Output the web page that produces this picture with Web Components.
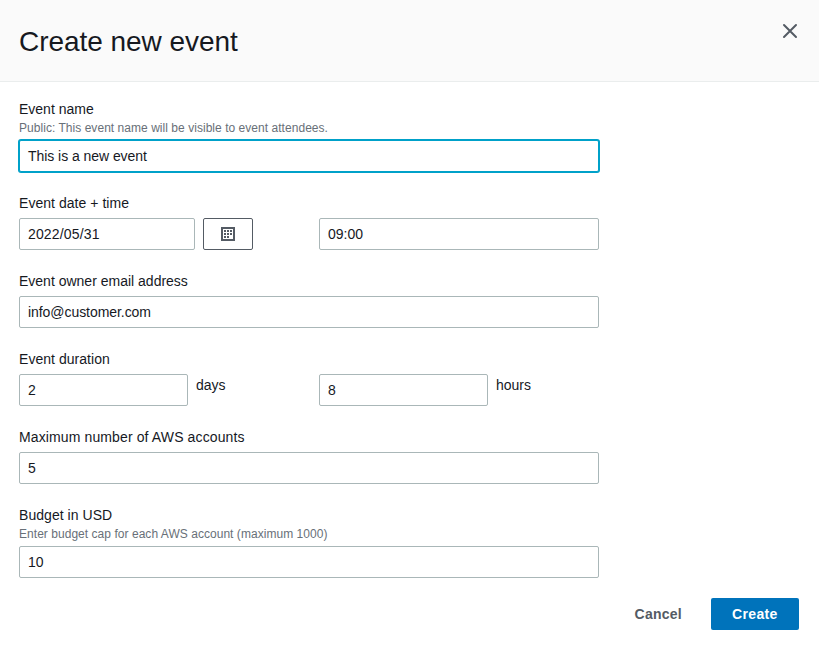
<!DOCTYPE html>
<html lang="en">
<head>
<meta charset="utf-8">
<title>Create new event</title>
<style>
  body { margin: 0; background: #fff; color: #16191f; font: 14px/22px "Liberation Sans", Arial, sans-serif; }
</style>
</head>
<body>
<event-dialog>
  <span slot="title">Create new event</span>
  <form-field>
    <span slot="label">Event name</span>
    <span slot="hint">Public: This event name will be visible to event attendees.</span>
    <text-input focused style="letter-spacing:-.05px">This is a new event</text-input>
  </form-field>
  <form-field columns>
    <span slot="label" style="letter-spacing:.04px">Event date + time</span>
    <input-group><text-input style="--w:176px;letter-spacing:.15px">2022/05/31</text-input><calendar-button></calendar-button></input-group>
    <text-input>09:00</text-input>
  </form-field>
  <form-field>
    <span slot="label">Event owner email address</span>
    <text-input style="letter-spacing:-.06px">info@customer.com</text-input>
  </form-field>
  <form-field columns>
    <span slot="label" style="letter-spacing:.04px">Event duration</span>
    <input-group><text-input style="--w:169px">2</text-input><span>days</span></input-group>
    <input-group><text-input style="--w:169px">8</text-input><span>hours</span></input-group>
  </form-field>
  <form-field>
    <span slot="label" style="letter-spacing:.12px">Maximum number of AWS accounts</span>
    <text-input>5</text-input>
  </form-field>
  <form-field>
    <span slot="label" style="letter-spacing:.05px">Budget in USD</span>
    <span slot="hint">Enter budget cap for each AWS account (maximum 1000)</span>
    <text-input>10</text-input>
  </form-field>
  <action-button slot="actions">Cancel</action-button>
  <action-button slot="actions" primary>Create</action-button>
</event-dialog>
<script>
const define = (name, html) => customElements.define(name, class extends HTMLElement {
  constructor() {
    super();
    const t = document.createElement('template');
    t.innerHTML = html;
    this.attachShadow({ mode: 'open' }).append(t.content.cloneNode(true));
  }
});

define('event-dialog', `
<style>
  :host { display: block; }
  header { box-sizing: border-box; height: 82px; padding: 23px 19px 0; display: flex; justify-content: space-between; background: #fafafa; border-bottom: 1px solid #eaeded; }
  h1 { margin: 1px 0 0; font-weight: 400; font-size: 28px; line-height: 36px; letter-spacing: -.04px; }
  button { all: unset; width: 20px; height: 16px; display: grid; place-items: center; }
  main { display: grid; gap: 20px; width: 580px; padding: 16px 19px 0; }
  footer { display: flex; justify-content: flex-end; gap: 8px; padding: 20px 20px 0; }
</style>
<header><h1><slot name="title"></slot></h1>
<button aria-label="Close"><svg width="16" height="16" viewBox="0 0 16 16" fill="none" stroke="#545b64" stroke-width="2" stroke-linecap="round"><path d="M2 2l12 12M14 2L2 14"/></svg></button></header>
<main><slot></slot></main>
<footer><slot name="actions"></slot></footer>`);

define('form-field', `
<style>
  :host { display: block; }
  .label { display: block; height: 22px; }
  ::slotted([slot=hint]) { display: block; font-size: 12px; line-height: 16px; letter-spacing: .04px; color: #687078; }
  .control { display: grid; gap: 20px; margin-top: 4px; }
  :host([columns]) .control { grid-template-columns: 1fr 1fr; }
</style>
<div class="label"><slot name="label"></slot></div>
<slot name="hint"></slot>
<div class="control"><slot></slot></div>`);

define('text-input', `
<style>
  :host { display: block; box-sizing: border-box; width: var(--w, 100%); height: 32px; padding: 4px 8px; border: 1px solid #aab7b8; border-radius: 2px; background: #fff; }
  :host([focused]) { border-color: #00a1c9; box-shadow: 0 0 0 1px #00a1c9; }
</style>
<div role="textbox"><slot></slot></div>`);

define('input-group', `
<style>:host { display: flex; gap: 8px; }</style><slot></slot>`);

define('calendar-button', `
<style>
  :host { display: grid; place-items: center; box-sizing: border-box; width: 50px; height: 32px; border: 1px solid #545b64; border-radius: 2px; }
  svg { display: block; }
</style>
<svg width="14" height="14" viewBox="0 0 14 14" shape-rendering="crispEdges"><path d="M1 1h12v12H1z" fill="none" stroke="#545b64" stroke-width="2"/><path d="M3 3h2v2H3zM6 3h2v2H6zM9 3h2v2H9zM3 6h2v2H3zM6 6h2v2H6zM9 6h2v2H9zM3 9h2v2H3zM6 9h2v2H6z" fill="#545b64"/></svg>`);

define('action-button', `
<style>
  :host { display: block; box-sizing: border-box; height: 32px; padding: 5px 21px; border-radius: 2px; font-weight: 700; letter-spacing: .25px; color: #545b64; }
  :host([primary]) { width: 88px; letter-spacing: .35px; background: #0073bb; color: #fff; }
</style>
<slot></slot>`);
</script>
</body>
</html>
